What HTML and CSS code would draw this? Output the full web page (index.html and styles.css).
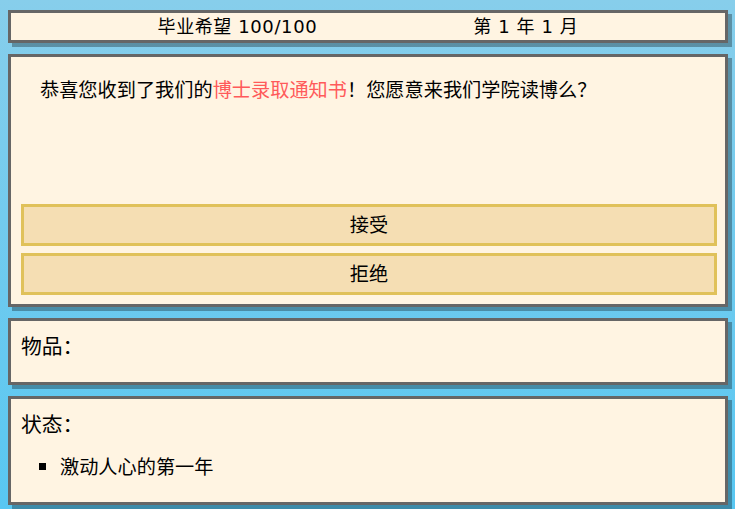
FILE: index.html
```html
<!DOCTYPE html>
<html lang="zh-CN">
<head>
    <meta charset="UTF-8">
    <meta name="viewport" content="width=device-width, initial-scale=1.0">
    <title>读博模拟器</title>
    <link rel="stylesheet" href="styles.css">
</head>
<body>
    <div class="game">
        <!-- 顶部状态栏 -->
        <div class="panel top-bar">
            <span class="hope">毕业希望 100/100</span>
            <span class="date">第 1 年 1 月</span>
        </div>

        <!-- 事件 -->
        <div class="panel event">
            <p class="message">恭喜您收到了我们的<span class="highlight">博士录取通知书</span>！您愿意来我们学院读博么？</p>
            <div class="choices">
                <button class="choice">接受</button>
                <button class="choice">拒绝</button>
            </div>
        </div>

        <!-- 物品 -->
        <div class="panel">
            <div class="panel-title">物品：</div>
        </div>

        <!-- 状态 -->
        <div class="panel">
            <div class="panel-title">状态：</div>
            <ul class="status-list">
                <li>激动人心的第一年</li>
            </ul>
        </div>
    </div>
</body>
</html>
```

FILE: styles.css
```css
* {
    box-sizing: border-box;
}

html,
body {
    margin: 0;
    height: 100%;
}

body {
    font-family: "Noto Sans", "Noto Sans CJK SC", sans-serif;
    font-size: 19.2px;
    line-height: 1.5;
    color: #000;
    background: linear-gradient(#87ceeb, #58c7f2);
    padding: 10px 8px;
}

.game {
    width: 720px;
    display: flex;
    flex-direction: column;
    gap: 11px;
}

.panel {
    background: #fff4e2;
    border: 3px solid #666;
    box-shadow: 4px 4px 0 rgba(0, 0, 0, 0.3);
    padding: 10px;
}

.top-bar {
    display: flex;
    justify-content: center;
    gap: 156px;
    padding: 0;
    font-family: "DejaVu Sans", "Noto Sans CJK SC", sans-serif;
    font-size: 18px;
    line-height: 27px;
    letter-spacing: 0.6px;
}

.event {
    padding: 10px 8px 9px 10px;
}

.message {
    margin: 0;
    height: 137px;
    padding: 9px 19px 0;
}

.highlight {
    color: #ff5a5a;
}

.choices {
    display: flex;
    flex-direction: column;
    gap: 7px;
}

.choice {
    font: inherit;
    color: #000;
    height: 42px;
    background: #f5deb3;
    border: 3px solid #e0c15a;
    padding: 0;
    cursor: pointer;
}

.panel-title {
    font-size: 20.8px;
    line-height: 31px;
    margin-bottom: 10px;
}

.status-list {
    margin: 0 0 10px;
    padding: 3px 0 0 39px;
    list-style: square;
}
```
